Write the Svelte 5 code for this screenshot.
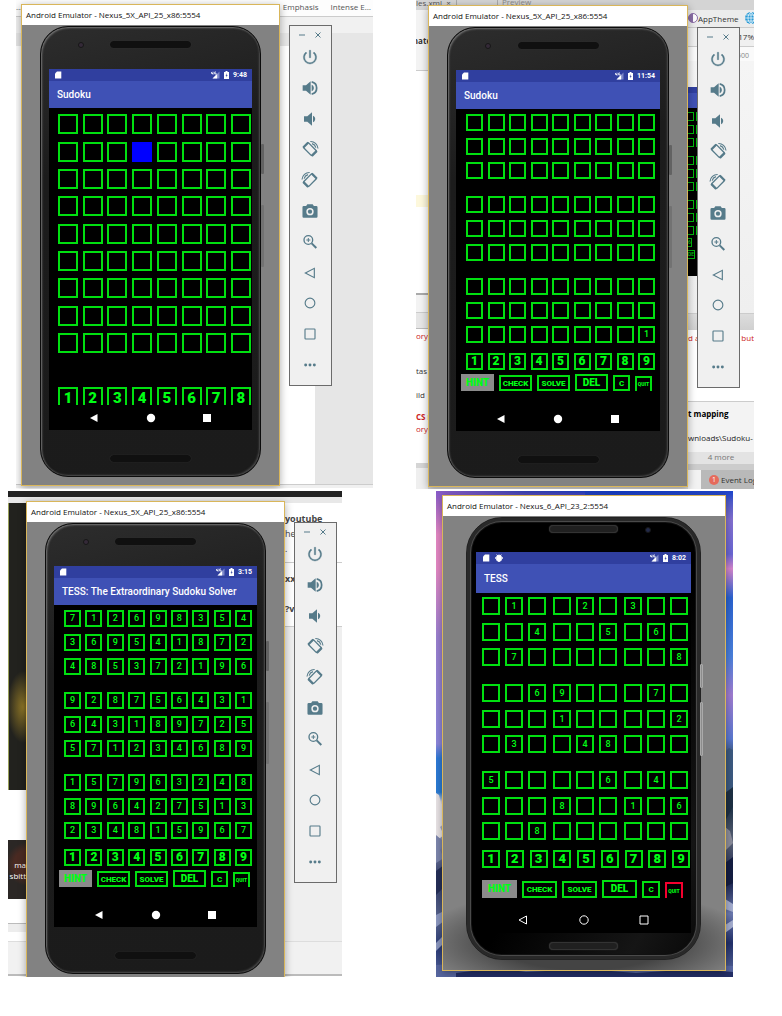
<script>
  const blank = (cols) => Array.from({ length: 9 }, () => ' '.repeat(cols));
  const withLast = blank(9);
  withLast[8] = '        1';

  const emulators = [
    {
      id: 'a',
      caption: 'Android Emulator - Nexus_5X_API_25_x86:5554',
      title: 'Sudoku',
      time: '9:48',
      rows: blank(8),
      selected: [1, 3],
      pad: '12345678',
      actions: false,
      toolbar: true
    },
    {
      id: 'b',
      caption: 'Android Emulator - Nexus_5X_API_25_x86:5554',
      title: 'Sudoku',
      time: '11:54',
      rows: withLast,
      pad: '123456789',
      actions: true,
      toolbar: true
    },
    {
      id: 'c',
      caption: 'Android Emulator - Nexus_5X_API_25_x86:5554',
      title: 'TESS: The Extraordinary Sudoku Solver',
      time: '3:15',
      rows: [
        '712698354', '369541872', '485372196',
        '928756431', '643189725', '571234689',
        '157963248', '896427513', '234815967'
      ],
      pad: '123456789',
      actions: true,
      toolbar: true
    },
    {
      id: 'd',
      caption: 'Android Emulator - Nexus_6_API_23_2:5554',
      title: 'TESS',
      time: '8:02',
      rows: [
        ' 1  2 3  ', '  4  5 6 ', ' 7      8',
        '  69   7 ', '   1    2', ' 3  48   ',
        '5    6 4 ', '   8  1 6', '  8      '
      ],
      pad: '123456789',
      actions: true,
      outlined: true,
      toolbar: false
    }
  ];

  const bands = (rows) => [rows.slice(0, 3), rows.slice(3, 6), rows.slice(6, 9)];

  const tools = [
    'Power', 'Volume up', 'Volume down', 'Rotate left', 'Rotate right',
    'Take screenshot', 'Zoom', 'Back', 'Home', 'Overview', 'More'
  ];
</script>

{#snippet toolIcon(name)}
  <svg class="tool-icon" viewBox="0 0 24 24" aria-hidden="true">
    {#if name === 'Power'}
      <path d="M13 2h-2v11h2zM18.2 4.6l-1.5 1.5A8 8 0 1 1 7.300 6.100L5.800 4.600A10 10 0 1 0 18.200 4.600z" fill="currentColor" stroke="currentColor" stroke-width=".6" />
    {:else if name === 'Volume up'}
      <path d="M1 8v8h5l7 6v-20l-7 6z" fill="currentColor" />
      <path d="M14.500 7v10c2-.9 3.300-2.800 3.300-5s-1.300-4.100-3.300-5z" fill="currentColor" />
      <path d="M14.500 2.800a9.400 9.400 0 0 1 0 18.400" fill="none" stroke="currentColor" stroke-width="2.600" />
    {:else if name === 'Volume down'}
      <path d="M3 8v8h5l7 6v-20l-7 6z" fill="currentColor" />
      <path d="M16.500 7v10c2-.9 3.300-2.800 3.300-5s-1.300-4.100-3.300-5z" fill="currentColor" />
    {:else if name === 'Rotate left' || name === 'Rotate right'}
      <g transform={name === 'Rotate right' ? 'matrix(-1 0 0 1 24 0)' : undefined} fill="none" stroke="currentColor">
        <rect x="6.500" y="3" width="10.500" height="18" rx="1" transform="rotate(-45 12 12)" stroke-width="2" />
        <path d="M1.900 9.800l7.500-7.500M14.700 22.300l7.500-7.500" stroke-width="3.400" />
        <path d="M12.500 .8c6-.2 11 4.200 11.500 10.500M15 4c3 .9 5 3 5.800 5.800" stroke-width="1.700" />
      </g>
    {:else if name === 'Take screenshot'}
      <path fill-rule="evenodd" fill="currentColor" d="M8 2L6.200 4.500H2.500A1.800 1.800 0 0 0 .7 6.300v13.900A1.800 1.800 0 0 0 2.500 22h19a1.800 1.800 0 0 0 1.800-1.800V6.300a1.800 1.800 0 0 0-1.800-1.800h-3.700L16 2zM12 7.500a5.500 5.500 0 1 1 0 11 5.500 5.500 0 0 1 0-11z" />
      <circle cx="12" cy="13" r="3.200" fill="currentColor" />
    {:else if name === 'Zoom'}
      <g fill="none" stroke="currentColor">
        <circle cx="9.500" cy="9" r="6.500" stroke-width="2" />
        <path d="M14.500 14l7 7" stroke-width="3" />
        <path d="M9.500 6v6M6.500 9h6" stroke-width="1.500" />
      </g>
    {:else if name === 'Back'}
      <path d="M18.500 5v14L5 12z" fill="none" stroke="currentColor" stroke-width="1.700" />
    {:else if name === 'Home'}
      <circle cx="12" cy="12" r="7.300" fill="none" stroke="currentColor" stroke-width="1.700" />
    {:else if name === 'Overview'}
      <rect x="4.500" y="4.500" width="15" height="15" rx="1" fill="none" stroke="currentColor" stroke-width="1.700" />
    {:else}
      <circle cx="5.500" cy="12" r="2.200" fill="currentColor" />
      <circle cx="12" cy="12" r="2.200" fill="currentColor" />
      <circle cx="18.500" cy="12" r="2.200" fill="currentColor" />
    {/if}
  </svg>
{/snippet}

{#snippet cell(value, selected)}
  <button class="cell" class:selected aria-label={value.trim() ? undefined : 'Empty cell'}>{value.trim()}</button>
{/snippet}

{#snippet emulator(e)}
  <section class="window window-{e.id}">
    <h2 class="caption">{e.caption}</h2>
    <div class="stage">
      <div class="phone">
        <div class="side side-power"></div>
        <div class="side side-volume"></div>
        <div class="forehead">
          <span class="camera"></span>
          <span class="speaker"></span>
        </div>
        <div class="screen">
          <div class="status">
            <svg class="card" viewBox="0 0 8 8" aria-hidden="true"><path d="M3 .5H7.300v7H1V2.500z" fill="#fff" /></svg>
            {#if e.outlined}
              <svg class="card" viewBox="0 0 8 8" aria-hidden="true">
                <path d="M1.500 3a2.500 2 0 0 1 5 0v3L5 7.500H3L1.500 6zM1.500.5l1.500 1.500M6.500.5L5 2M.5 3v2M7.500 3v2" fill="#fff" stroke="#fff" stroke-width=".7" />
              </svg>
            {/if}
            <svg class="signal" viewBox="0 0 9 8" aria-hidden="true">
              <path d="M.5 1v1.500h1.500M2 .7v3M5 1H3.700v2H5V2" fill="none" stroke="#fff" stroke-width=".8" />
              <path d="M8.500.5v7h-7z" fill="#7c87c8" />
              <path d="M6.200 2.800v4.700H1.500z" fill="#fff" />
            </svg>
            <svg class="battery" viewBox="0 0 5 8" aria-hidden="true">
              <path d="M1.500 0h2v1H5v7H0V1h1.500z" fill="#fff" />
              <path d="M3 2L1.600 4.800h1L2.200 6.500l1.400-2.500h-1z" fill="#303f9f" />
            </svg>
            <span>{e.time}</span>
          </div>
          <h1 class="appbar">{e.title}</h1>
          <div class="content">
            <div class="board">
              {#each bands(e.rows) as band, b}
                <div class="band">
                  {#each band as row, r}
                    <div class="row">
                      {#each row.split('') as value, c}
                        {@render cell(value, e.selected?.[0] === b * 3 + r && e.selected?.[1] === c)}
                      {/each}
                    </div>
                  {/each}
                </div>
              {/each}
            </div>
            <div class="row pad">
              {#each e.pad.split('') as n}
                <button class="cell key">{n}</button>
              {/each}
            </div>
            {#if e.actions}
              <div class="actions">
                <button class="action hint">HINT</button>
                <button class="action lower">CHECK</button>
                <button class="action lower">SOLVE</button>
                <button class="action big">DEL</button>
                <button class="action lower small">C</button>
                <button class="action small quit">QUIT</button>
              </div>
            {/if}
          </div>
          <nav class="nav" class:outlined={e.outlined}>
            <button aria-label="Back"><svg viewBox="0 0 10 10"><path d="M8.500 1v8L1 5z" /></svg></button>
            <button aria-label="Home"><svg viewBox="0 0 10 10"><circle cx="5" cy="5" r="4.200" /></svg></button>
            <button aria-label="Overview"><svg viewBox="0 0 10 10"><path d="M1 1h8v8H1z" /></svg></button>
          </nav>
        </div>
        <div class="chin"><span class="speaker"></span></div>
      </div>
    </div>
  </section>
  {#if e.toolbar}
    <aside class="toolbar toolbar-{e.id}">
      <div class="toolbar-head">
        <button aria-label="Minimize"><svg viewBox="0 0 8 8"><path d="M1 4h6" /></svg></button>
        <button aria-label="Close"><svg viewBox="0 0 8 8"><path d="M1.500 1.500l5 5M6.500 1.500l-5 5" /></svg></button>
      </div>
      <div class="tools">
        {#each tools as t}
          <button class="tool" aria-label={t}>{@render toolIcon(t)}</button>
        {/each}
      </div>
    </aside>
  {/if}
{/snippet}

<main>
  <div class="pair pair-top">
    <article class="shot">
      <div class="behind doc">
        <div class="styles"><span class="dots">…</span><span>Emphasis</span><span>Intense E…</span></div>
        <div class="ribbon"></div>
        <div class="ruler"><i></i></div>
        <div class="paper"><i></i></div>
        <div class="foot"></div>
      </div>
      {@render emulator(emulators[0])}
    </article>
    <article class="shot">
      <div class="behind ide">
        <div class="tabs"><span class="tab">les.xml &nbsp;×</span><span class="tab preview">Preview</span></div>
        <div class="panes">
          <div class="left">
            <div class="l-crumb"><b>nate</b></div>
            <div class="l-code"></div>
            <div class="l-mark"></div>
            <div class="l-code2"></div>
            <div class="l-bar"></div>
            <div class="l-head"></div>
            <div class="l-log">
              <span class="red">ory</span>
              <span class="gap">tas</span>
              <span>ild</span>
              <b class="red">CS r</b>
              <span class="red">ory</span>
            </div>
            <div class="l-status"></div>
          </div>
          <div class="right">
            <div class="r-theme">
              <svg viewBox="0 0 10 10" aria-hidden="true"><circle cx="5" cy="5" r="4.500" fill="#fff" stroke="#8c6fa8" /><path d="M5 .5a4.500 4.500 0 0 0 0 9z" fill="#8c6fa8" /></svg>
              <span>AppTheme</span>
              <svg class="globe" viewBox="0 0 12 12" aria-hidden="true"><circle cx="6" cy="6" r="6" fill="#2c9bd6" /><path d="M0 6h12M6 0v12M1 3h10M1 9h10M6 0C2 3 2 9 6 12M6 0c4 3 4 9 0 12" fill="none" stroke="#fff" stroke-width=".7" /></svg>
            </div>
            <div class="r-zoom">17%</div>
            <div class="r-ruler">500</div>
            <div class="r-canvas">
              <div class="mini">
                <i class="mini-status"></i><i class="mini-bar"></i>
                <div class="mini-cells">
                  {#each Array(9) as _}<div class="mini-row"><i></i><i></i></div>{/each}
                  <b>6</b><b>DE</b>
                </div>
              </div>
            </div>
            <div class="r-head"></div>
            <div class="r-log"><span>d as</span><span>but</span></div>
            <div class="r-note"><b>t mapping</b><span>wnloads\Sudoku-</span></div>
            <div class="r-more">4 more</div>
            <div class="r-event"><span class="bubble">1</span>Event Log</div>
          </div>
        </div>
      </div>
      {@render emulator(emulators[1])}
    </article>
  </div>
  <div class="pair pair-bottom">
    <article class="shot">
      <div class="behind web">
        <div class="w-top"></div>
        <div class="w-light"></div>
        <div class="panes">
          <div class="w-left">
            <div class="video"></div>
            <div class="w-white"></div>
            <div class="thumb">ma<br />sbitt</div>
            <div class="w-white2"></div>
            <div class="w-line"></div>
          </div>
          <div class="w-right">
            <div class="w-card tall"><b>youtube</b><span>he</span><span>.</span></div>
            <div class="w-card"><b>xx</b><b>?v=</b></div>
          </div>
        </div>
        <div class="w-foot"></div>
      </div>
      {@render emulator(emulators[2])}
    </article>
    <article class="shot">
      <div class="behind wallpaper">
        <div class="wall-left"></div>
        <div class="wall-right"></div>
      </div>
      <svg class="behind rocks" viewBox="0 0 297 486" preserveAspectRatio="none" aria-hidden="true">
        <path d="M0 302l3 2 2 8 4 4v16l-5 4 4 8-8 6z" fill="#e9e4e6" />
        <path d="M0 344l7 6-3 9 4 8-8 5z" fill="#7d86ad" />
        <path d="M0 380l8-6v22l-8 8z" fill="#252f58" />
        <path d="M0 424l8-4v10l-8 6zM0 452l8-8v8l-8 8z" fill="#8c98c0" />
        <path d="M0 474l60-4 80 6 80-5 77 4v11H0z" fill="#5766a0" />
        <path d="M20 482l40-5 30 4 60-3 50 4 60-4 37 3v5H20z" fill="#232e66" />
        <path d="M288 262l5-5 4 2v40l-6 8-3-6z" fill="#3c5a80" />
        <path d="M289 302l8-6v20l-8 14z" fill="#1d3044" />
        <path d="M289 336l5 4 3 12-8 8z" fill="#8b8d9c" />
        <path d="M289 372l8-6v26l-8 4z" fill="#141d42" />
        <path d="M289 408l8 5v8l-8-3zM289 434l8-5v7l-8 6z" fill="#a5aed0" />
      </svg>
      {@render emulator(emulators[3])}
    </article>
  </div>
</main>

<style>
  :global(body) { margin: 0; background: #fff; }
  main {
    display: flex; flex-direction: column; gap: 2px;
    padding-bottom: 39px;
    font-family: "Open Sans", "Noto Sans", sans-serif;
    font-size: 9px; line-height: 12px; color: #333;
  }
  h1, h2 { margin: 0; }
  button { padding: 0; border: 0; background: none; font: inherit; color: inherit; }
  i { display: block; }

  .pair { display: grid; }
  .pair-top { grid-template-columns: 357fr 338fr; gap: 43px; padding: 0 28px 0 16px; }
  .pair-bottom { grid-template-columns: 334fr 297fr; gap: 94px; padding: 0 49px 0 8px; }
  .shot { position: relative; overflow: hidden; min-height: 489px; min-width: 0; }
  .pair-bottom .shot { min-height: 486px; }

  /* emulator windows float over each desktop */
  .window { position: absolute; border: 1px solid #d9b65a; background: #828282; box-shadow: 0 2px 8px #0005; }
  .window-a { left: 5px; right: 93px; top: 4px; }
  .window-b { left: 12px; right: 66px; top: 5px; }
  .window-c { left: 18px; right: 57px; top: 10px; }
  .window-d { left: 6px; right: 7px; top: 4px; }
  .caption {
    height: 20px; padding-left: 4px; background: #fff; color: #111;
    font-size: 8px; line-height: 20px; font-weight: 400; white-space: nowrap; overflow: hidden;
  }
  .stage { padding: 1px 18px 8px 18px; }
  .phone {
    position: relative; display: flex; flex-direction: column;
    padding: 0 8px 0 8px; border: 1px solid #0c0c0c; border-radius: 28px;
    background: linear-gradient(165deg, #2d2d2d, #1c1c1c 30%, #1b1b1b);
    box-shadow: inset 1px 1px 2px #777, inset -1px -1px 2px #4c4c4c;
  }
  .forehead { position: relative; height: 42px; display: flex; justify-content: center; padding-top: 14px; box-sizing: border-box; }
  .camera { position: absolute; left: 29px; top: 15px; width: 4px; height: 4px; border-radius: 50%; background: #342a38; border: 1px solid #171717; }
  .speaker { width: 81px; height: 7px; border-radius: 4px; background: #101010; box-shadow: 0 0 1px #444; }
  .chin { height: 46px; display: flex; justify-content: center; padding-top: 25px; box-sizing: border-box; }
  .side { position: absolute; right: -4px; width: 3px; background: #626262; border-radius: 1px; }
  .side-power { top: 117px; height: 30px; }
  .side-volume { top: 178px; height: 62px; background: #727272; }

  .screen { display: flex; flex-direction: column; height: 361px; background: #000; font-family: Roboto, sans-serif; }
  .status { display: flex; align-items: center; height: 12px; padding: 0 5px; background: #303f9f; color: #fff; font-size: 7px; line-height: 12px; font-weight: 700; }
  .card { width: 8px; height: 8px; margin-right: 5px; }
  .signal { width: 9px; height: 8px; margin-left: auto; }
  .battery { width: 5px; height: 8px; margin: 0 4px; }
  .appbar { height: 27px; padding-left: 8px; background: #3f51b5; color: #fff; font-size: 10px; line-height: 28px; font-weight: 500; white-space: nowrap; }
  .content { height: 282px; box-sizing: border-box; padding: 5px 5px 0 10px; overflow: hidden; color: #00ff15; }
  .board { display: flex; flex-direction: column; gap: 17px; }
  .band { display: flex; flex-direction: column; justify-content: space-between; height: 65px; }
  .row { display: flex; justify-content: space-between; }
  .cell { width: 17px; height: 17px; box-sizing: border-box; border: 2px solid #00e010; font-size: 9px; font-weight: 500; line-height: 13px; text-align: center; }
  .cell.selected { background: #00f; border-color: #00f; }
  .pad { margin-top: 10px; }
  .cell.key { font-size: 12px; font-weight: 900; }
  .actions { display: flex; gap: 5px; margin: 4px -5px 0; }
  .action { flex: none; width: 33px; height: 17px; box-sizing: border-box; border: 2px solid #00e010; font-size: 8px; line-height: 13px; font-weight: 900; text-align: center; }
  .action.hint { background: #8b8b8b; border-color: #8b8b8b; font-size: 10px; }
  .action.big { font-size: 10px; }
  .lower { margin-top: 1px; height: 16px; }
  .small { width: 17px; }
  .action.quit { margin-top: 2px; font-size: 5px; border-bottom: 0; height: 15px; }

  .nav { display: flex; justify-content: space-between; align-items: center; height: 25px; margin-top: auto; padding: 0 40px; }
  .nav button { width: 10px; height: 10px; }
  .nav svg { display: block; fill: #fff; overflow: visible; }
  .nav.outlined svg { fill: none; stroke: #fff; }

  .window-a .content { height: 297px; padding: 6px 1px 0 9px; }
  .window-a .board { height: 239px; gap: 0; justify-content: space-between; }
  .window-a .band { height: 75px; }
  .window-a .cell { width: 20px; height: 20px; }
  .window-a .pad { margin-top: 34px; }
  .window-a .cell.key { font-size: 15px; line-height: 19px; }

  .window-d .stage { padding: 1px 24px 10px 23px; background: radial-gradient(ellipse 60% 12% at 50% 94%, #444 50%, #828282); }
  .window-d .phone { padding: 0 9px; border: 1px solid #222; border-radius: 36px; background: linear-gradient(120deg, #000 55%, #151515 85%, #080808); box-shadow: inset 0 0 0 3px #292929, inset 0 0 0 4px #4a4a4a, inset 0 0 0 5px #111; }
  .window-d .forehead { height: 34px; padding-top: 7px; }
  .window-d .speaker { width: 67px; height: 6px; background: #202020; border: 1px solid #333; }
  .window-d .camera { left: auto; right: 40px; top: 9px; background: #222a4a; }
  .window-d .screen { height: 381px; }
  .window-d .chin { height: 26px; padding-top: 9px; }
  .window-d .appbar { height: 29px; line-height: 30px; }
  .window-d .content { height: 305px; padding: 4px 3px 0 6px; }
  .window-d .board { gap: 18px; }
  .window-d .band { height: 69px; }
  .window-d .cell { width: 18px; height: 18px; line-height: 14px; }
  .window-d .board .cell:nth-child(3n + 1):not(:first-child) { margin-left: 2px; }
  .window-d .pad { margin-right: -2px; }
  .window-d .cell.key { font-size: 13px; }
  .window-d .actions { margin: 12px 0 0; }
  .window-d .action { width: 35px; height: 18px; line-height: 14px; }
  .window-d .lower { height: 17px; }
  .window-d .small { width: 18px; }
  .window-d .quit { border-color: #f5002e; height: 16px; }
  .window-d .status .card:first-child { margin-left: 1px; }
  .window-d .nav { height: 26px; margin-top: 9px; padding: 0 42px; }
  .window-d .side { background: #8d8d8d; border: 1px solid #aaa; width: 1px; right: -3px; }
  .window-d .side-power { top: 146px; height: 22px; }
  .window-d .side-volume { top: 184px; height: 52px; }

  .toolbar { position: absolute; width: 41px; border: 1px solid #6b6b6b; background: #f0f0f0; color: #567b8a; }
  .toolbar-a { right: 41px; top: 25px; }
  .toolbar-b { right: 14px; top: 27px; }
  .toolbar-c { right: 5px; top: 31px; }
  .toolbar-head { display: flex; justify-content: center; gap: 8px; height: 18px; align-items: center; padding-right: 2px; }
  .toolbar-head button { width: 8px; height: 8px; }
  .toolbar-head svg { display: block; fill: none; stroke: #567b8a; }
  .tools { display: flex; flex-direction: column; align-items: center; justify-content: space-between; height: 328px; margin: 3px 1px 10px 0; }
  .tool { width: 20px; height: 20px; display: grid; place-items: center; }
  .tool-icon { width: 16px; height: 16px; overflow: visible; }

  .behind { position: absolute; inset: 0; display: flex; flex-direction: column; overflow: hidden; white-space: nowrap; }
  .panes { flex: 1; display: flex; justify-content: space-between; min-height: 0; }

  .doc { background: #fff; bottom: 1px; }
  .styles { height: 16px; display: flex; justify-content: flex-end; gap: 12px; padding-right: 2px; line-height: 14px; background: #fdfdfd; border-bottom: 1px solid #ccc; color: #555; font-size: 8px; }
  .dots { margin-right: auto; }
  .ribbon { height: 16px; background: #f1f1f1; }
  .ruler { height: 13px; background: #e6e6e6; display: flex; justify-content: flex-end; }
  .ruler i { width: 84px; background: #e6e6e6; }
  .paper { flex: 1; display: flex; justify-content: flex-end; }
  .paper i { width: 58px; background: #e6e6e6; }
  .foot { height: 3px; border-top: 1px solid #ccc; background: #f0f0f0; }

  .ide { background: #d8d8d8; }
  .tabs { height: 10px; display: flex; background: #d4d4d4; color: #555; font-size: 8px; line-height: 5px; }
  .tab { width: 40px; border-right: 1px solid #aaa; }
  .preview { margin-left: 40px; padding-left: 4px; border-left: 1px solid #aaa; border-right: 0; color: #888; line-height: 3px; }
  .left { width: 12px; display: flex; flex-direction: column; overflow: hidden; }
  .left b, .left span { display: block; }
  .l-crumb { height: 60px; background: #f3f3f3; border-bottom: 1px solid #ccc; line-height: 62px; font-size: 8px; display: flex; justify-content: center; }
  .l-code { height: 124px; background: #fff; }
  .l-mark { height: 12px; background: #fdf8dc; }
  .l-code2 { height: 86px; background: #fff; border-bottom: 2px solid #aaa; }
  .l-bar { height: 17px; background: #f3f3f3; border-bottom: 1px solid #ccc; }
  .l-head { height: 15px; background: #e6e6e6; border-bottom: 1px solid #bbb; }
  .l-log { flex: 1; background: #fff; padding-top: 1px; font-size: 8px; }
  .red { color: #c22; }
  .l-log .gap { margin: 23px 0 12px; }
  .l-log b { margin-top: 10px; }
  .l-status { height: 26px; background: #efefef; border-top: 5px solid #d5d5d5; box-sizing: border-box; }
  .right { width: 66px; display: flex; flex-direction: column; overflow: hidden; }
  .r-theme { height: 17px; display: flex; align-items: center; background: #ececec; border-bottom: 1px solid #ccc; font-size: 8px; line-height: 14px; }
  .r-theme svg { width: 10px; height: 10px; flex: none; margin-bottom: 2px; }
  .r-theme .globe { width: 12px; height: 12px; margin-left: auto; margin-right: -3px; }
  .r-zoom { height: 18px; background: #f0f0f0; border-bottom: 1px solid #ccc; text-align: right; line-height: 18px; font-size: 8px; }
  .r-ruler { height: 14px; background: #fafafa; color: #888; font-size: 7px; line-height: 18px; text-align: right; padding-right: 5px; }
  .r-canvas { display: flex; height: 252px; background: linear-gradient(#f5f5f5, #efefef); border-bottom: 1px solid #ccc; }
  .mini { width: 11px; height: 189px; margin-top: 26px; background: #000; overflow: hidden; }
  .mini-status { height: 6px; background: #303f9f; }
  .mini-bar { height: 15px; background: #3f51b5; }
  .mini-cells { display: grid; justify-items: start; }
  .mini-row { display: flex; gap: 2px; margin-top: 4px; }
  .mini-row i { width: 6px; height: 9px; border: 1px solid #00b80d; border-left: 0; box-sizing: border-box; }
  .mini-row i + i { border-left: 1px solid #00b80d; }
  .mini-row:nth-child(3n + 1):not(:first-child) { margin-top: 9px; }
  .mini-cells b { font: 500 5px/7px Roboto, sans-serif; color: #0c1; border: 1px solid #00b80d; border-left: 0; margin-top: 3px; }
  .r-head { height: 16px; background: linear-gradient(#ddd, #d0d0d0); }
  .r-log { height: 71px; background: #fff; color: #c22; display: flex; justify-content: space-between; line-height: 15px; font-size: 8px; }
  .r-note { height: 50px; background: #f3f3f3; border-top: 1px solid #ccc; color: #222; line-height: 24px; }
  .r-note b { display: block; color: #000; font-size: 8px; }
  .r-note span { font-size: 8px; }
  .r-more { height: 12px; background: #e3e3e3; border-bottom: 6px solid #ccc; color: #777; text-align: center; font-size: 8px; line-height: 10px; }
  .r-event { flex: 1; display: flex; align-items: center; gap: 2px; background: linear-gradient(90deg, #f2f2f2 13px, #b9b9b9 13px); padding-left: 21px; font-size: 8px; }
  .bubble { flex: none; width: 10px; height: 10px; border-radius: 50%; background: #e56a5c; color: #fff; font-size: 7px; line-height: 10px; text-align: center; }

  .web { background: #fff; bottom: 1px; }
  .w-top { height: 6px; background: #222; }
  .w-light { height: 6px; background: #e8e8e8; }
  .w-left { width: 18px; display: flex; flex-direction: column; }
  .video { height: 287px; background: radial-gradient(ellipse 16px 36px at 14px 204px, #8d7526, transparent), #22221e; border-left: 1px solid #9aa05a; }
  .w-white { height: 50px; }
  .thumb { height: 59px; background: radial-gradient(circle at 20px 24px, #4a2a22 14px, #2b2725 22px); color: #fff; text-align: right; font-size: 8px; line-height: 11px; padding-top: 19px; box-sizing: border-box; }
  .w-white2 { height: 24px; border-bottom: 1px solid #bbb; }
  .w-line { height: 8px; background: #ededed; }
  .w-right { width: 57px; background: #efefef; }
  .w-card { height: 64px; box-sizing: border-box; background: #fff; border-bottom: 1px solid #ccc; padding-top: 8px; line-height: 15px; color: #444; }
  .w-card.tall { padding-top: 8px; height: 60px; }
  .w-card b, .w-card span { display: block; }
  .w-card:not(.tall) b { height: 30px; }
  .w-foot { height: 32px; background: #f1f1f1; border-top: 1px solid #ddd; border-bottom: 2px solid #bbb; }

  .wallpaper { flex-direction: row; justify-content: space-between; background: linear-gradient(90deg, #8a5cc8, #3440b0 30%, #1038c0 60%, #2046cc); }
  .rocks { width: 100%; height: 100%; }
  .wall-left, .wall-right { width: 50%; mask-image: linear-gradient(#0000, #000 10px); }
  .wall-left { background: linear-gradient(#8a5cc8, #e488c4 9%, #e488c4 16%, #9b80d0 30%, #8c86dc 52%, #2f7ad8 55%, #2a7cd4 62%, #dcd8e0 64%, #8a92b8 72%, #303a66 80%, #5a6690 88%, #2c3c78 94%, #5666a0); }
  .wall-right { background: linear-gradient(#3350c8, #8370d0 6%, #6a66d4 13%, #d485cc 16%, #2a62d0 22%, #4a80dc 34%, #a07cd0 42%, #5a78d0 51%, #405a80 54%, #26384e 66%, #5c6478 72%, #16204a 80%, #6c7ab0 87%, #22306a 93%, #5c6ca0); }
</style>
